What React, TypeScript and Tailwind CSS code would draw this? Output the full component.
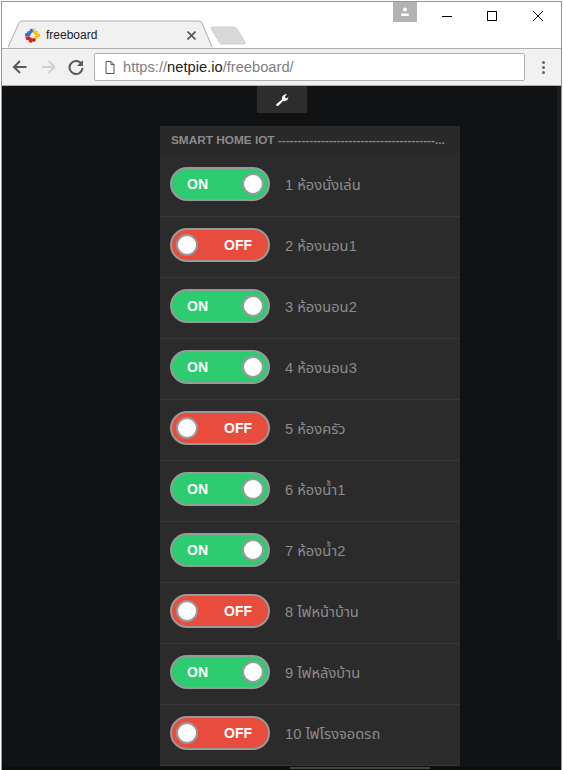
const rooms = [
  { label: '1 ห้องนั่งเล่น', on: true },
  { label: '2 ห้องนอน1', on: false },
  { label: '3 ห้องนอน2', on: true },
  { label: '4 ห้องนอน3', on: true },
  { label: '5 ห้องครัว', on: false },
  { label: '6 ห้องน้ำ1', on: true },
  { label: '7 ห้องน้ำ2', on: true },
  { label: '8 ไฟหน้าบ้าน', on: false },
  { label: '9 ไฟหลังบ้าน', on: true },
  { label: '10 ไฟโรงจอดรถ', on: false },
]

function Toggle({ on }: { on: boolean }) {
  return (
    <div
      className={`w-[100px] h-[34px] mb-[4px] shrink-0 rounded-full border-2 border-[#999] flex items-center justify-between px-[4px] text-white font-bold text-sm ${
        on ? 'bg-[#2ecc71]' : 'bg-[#e74c3c]'
      }`}
    >
      {on ? (
        <>
          <span className="pl-[11px]">ON</span>
          <span className="rounded-full bg-white border-2 border-[#999] box-content w-[18px] h-[18px]" />
        </>
      ) : (
        <>
          <span className="rounded-full bg-white border-2 border-[#999] box-content w-[18px] h-[18px]" />
          <span className="pr-[12px]">OFF</span>
        </>
      )}
    </div>
  )
}

function Logo() {
  return (
    <svg width="17" height="17" viewBox="0 0 17 17">
      <path d="M1 9 L1 6.5 L3 6 L3.5 4 L5 4.5 L6.5 2 L8.5 1.5 L9 5 Q7 5.5 6.5 8 L5.5 9.5 Z" fill="#2f6fe0" />
      <path d="M9 1.5 L11 2 L11.5 4 L14 4 L13.5 6 L16 7 L16 10 L13.5 10.5 L14 12 L11.5 11 Q10 10 10 9 L12 8.5 L9 6 Z" fill="#f7c600" />
      <path d="M1 9.5 L5.5 9.5 Q6.5 11 9 11.5 L11 11 L12 13 L10.5 15 L8.5 14.5 L7 16 L5 15 L4.5 13 L2.5 13 Z" fill="#d8201c" />
    </svg>
  )
}

export default function App() {
  return (
    <div className="w-[563px] h-[770px] bg-white overflow-hidden pl-px pt-px font-['Liberation_Sans','Noto_Sans',sans-serif]">
      <div className="w-[561px] h-[769px] border-x border-t border-[#6db35f] flex flex-col overflow-hidden">
        {/* title bar + tabs */}
        <div className="h-[46px] relative bg-white shrink-0 flex">
          <svg className="absolute left-0 top-[18px]" width="260" height="28" viewBox="0 0 260 28">
            <path d="M6 28 L17 3 Q18 1 20 1 L197 1 Q199 1 200 3 L211 28 Z" fill="#f1f1f1" />
            <path d="M6 27 L17 3 Q18 1 20 1 L197 1 Q199 1 200 3 L210 27" fill="none" stroke="#adadad" />
            <path d="M209 8 Q209 7 211 7 L232 7 Q234 7 235 9 L243 22 Q244 24 242 24 L220 24 Q218 24 217 22 Z" fill="#d9d9d9" stroke="#cfcfcf" />
          </svg>
          <div className="absolute left-[22px] top-[24px] flex items-center gap-[5px] text-[12px] text-[#222]">
            <Logo />
            <span>freeboard</span>
          </div>
          <svg className="absolute left-[185px] top-[29px]" width="9" height="9" viewBox="0 0 9 9">
            <path d="M0.5 0.5 L8.5 8.5 M8.5 0.5 L0.5 8.5" stroke="#555" strokeWidth="1.6" />
          </svg>
          <div className="ml-auto flex items-start h-[20px]">
            <div className="w-6 h-5 bg-[#b3b3b3] flex items-center justify-center mr-2">
              <svg width="10" height="10" viewBox="0 0 10 10">
                <circle cx="5" cy="2.6" r="2" fill="#fff" />
                <path d="M1 9 L1.5 6.5 L8.5 6.5 L9 9 Z" fill="#fff" />
              </svg>
            </div>
            <svg width="130" height="16" viewBox="0 0 130 16" className="mt-[4px] mr-[6px]">
              <path d="M17 10.5 H27" stroke="#000" />
              <rect x="62.5" y="5.5" width="9" height="9" fill="none" stroke="#000" />
              <path d="M108 5 L118 15 M118 5 L108 15" stroke="#000" />
            </svg>
          </div>
        </div>

        {/* toolbar */}
        <div className="h-[38px] shrink-0 bg-[#f1f1f1] border-y border-[#adadad] flex items-center">
          <div className="w-[92px] shrink-0 flex items-center">
            <svg width="92" height="20" viewBox="0 0 92 20">
              <path d="M24.5 10 H12 M18 4 L12 10 L18 16" fill="none" stroke="#5a5a5a" strokeWidth="2" />
              <path d="M40 10 H52.5 M46.5 4 L52.5 10 L46.5 16" fill="none" stroke="#d0d0d0" strokeWidth="2" />
              <path d="M79.5 7 A6.5 6.5 0 1 0 80.5 11" fill="none" stroke="#5a5a5a" strokeWidth="2" />
              <path d="M81 3 V9 H75 Z" fill="#5a5a5a" />
            </svg>
          </div>
          <div className="w-[431px] h-[28px] bg-white border border-[#b0b0b0] rounded-[2px] flex items-center text-[14.7px] text-[#808080]">
            <svg className="ml-[10px] mr-[8px]" width="10" height="13" viewBox="0 0 10 13">
              <path d="M1 .5 H6 L9 3.5 V12.5 H1 Z M6 .5 V3.5 H9" fill="#fff" stroke="#555" />
            </svg>
            <span>https://<span className="text-[#222]">netpie.io</span>/freeboard/</span>
          </div>
          <svg className="ml-[17px]" width="3" height="13" viewBox="0 0 3 13">
            <circle cx="1.5" cy="1.5" r="1.5" fill="#666" />
            <circle cx="1.5" cy="6.5" r="1.5" fill="#666" />
            <circle cx="1.5" cy="11.5" r="1.5" fill="#666" />
          </svg>
        </div>

        {/* freeboard page */}
        <div className="flex-1 min-h-0 bg-[#101214] flex flex-col items-start overflow-hidden relative">
          <div className="w-[50px] h-[27px] ml-[255px] bg-[#2d2d2d] flex items-center justify-center shrink-0">
            <svg width="14" height="14" viewBox="0 0 14 14">
              <path d="M1 11.5 L7 6.5 Q6.5 3 9.5 1.5 Q11 1 12 1.5 L9.8 3.6 L10.5 5 L12 5.5 L13.3 3.5 Q13.6 6 11.5 7.5 Q9.5 8.5 8 8 L3 13 Q1.5 13.5 1 11.5 Z" fill="#fff" />
            </svg>
          </div>
          <div className="w-[300px] mt-[13px] ml-[158px] bg-[#2b2b2b] shrink-0">
            <div className="h-[30px] bg-[#292929] flex items-center px-[11px] text-[11.8px] font-bold text-[#8b8b8b] whitespace-nowrap">
              SMART HOME IOT ----------------------------------------...
            </div>
            {rooms.map((room) => (
              <div key={room.label} className="h-[61px] flex items-center px-[10px] gap-[15px] border-b border-[#363636]">
                <Toggle on={room.on} />
                <span className="mb-[2px] text-[14.7px] text-[#8b8b8b] font-['Liberation_Sans','Noto_Sans','Noto_Sans_Thai','DejaVu_Sans',sans-serif]">{room.label}</span>
              </div>
            ))}
          </div>
          {/* page scrollbar */}
          <div className="absolute right-0 top-0 w-[4px] h-[554px] bg-[#1b1c1e]" />
        </div>
        <div className="h-[3px] shrink-0 bg-[#0a0d08] pl-[288px]">
          <div className="w-[140px] h-[2px] bg-[#444]" />
        </div>
      </div>
    </div>
  )
}
